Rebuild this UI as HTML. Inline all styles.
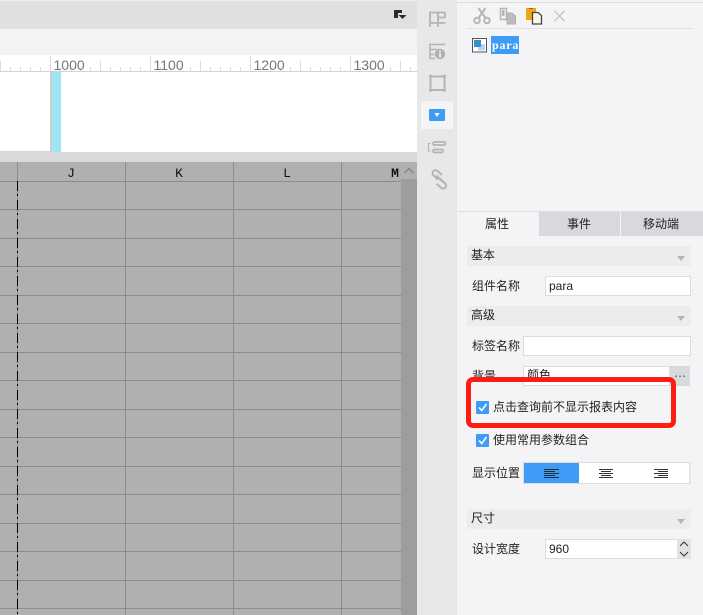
<!DOCTYPE html>
<html lang="zh"><head><meta charset="utf-8"><style>
html,body{margin:0;padding:0}
body{width:703px;height:615px;overflow:hidden;position:relative;background:#f4f4f7;font-family:"Liberation Sans","Noto Sans CJK SC",sans-serif;font-size:12px;color:#222}
.a,.t{position:absolute}
.t{line-height:16px;white-space:nowrap}
.sec{position:absolute;left:467px;width:224px;height:20px;background:#ececec}
.sec:after{content:"";position:absolute;right:6px;top:10px;border:4px solid transparent;border-top:5px solid #b5b5b5;border-bottom:0}
.inp{position:absolute;box-sizing:border-box;background:#fff;border:1px solid #dcdcdc;height:20px;line-height:17px;padding-left:3px}
.cb{position:absolute;width:13px;height:13px;background:#3f9cf6;border-radius:1px}
</style></head><body>
<!-- top left -->
<div class="a" style="left:0;top:0;width:417px;height:2px;background:#eeeeef"></div>
<div class="a" style="left:0;top:1px;width:417px;height:28px;background:#e0e0e2"></div>
<div class="a" style="left:0;top:29px;width:417px;height:26px;background:#f3f3f6"></div>
<svg class="a" style="left:393px;top:9px" width="14" height="12"><path d="M1 1h8v3h-4v5h-4z" fill="#2b2b2b"/><path d="M5.500 6h8l-4 4z" fill="#2b2b2b"/></svg>
<!-- ruler -->
<svg class="a" style="left:0;top:55px" width="417" height="17">
<rect width="417" height="17" fill="#fff"/><rect y="16" width="417" height="1" fill="#d2d2d2"/>
<g stroke="#dcdcdc" stroke-width="1" shape-rendering="crispEdges">
<path d="M0.500 6v10M10.500 12v4M20.500 12v4M30.500 12v4M40.500 12v4M50.500 1v15M60.500 12v4M70.500 12v4M80.500 12v4M90.500 12v4M100.500 6v10M110.500 12v4M120.500 12v4M130.500 12v4M140.500 12v4M150.500 1v15M160.500 12v4M170.500 12v4M180.500 12v4M190.500 12v4M200.500 6v10M210.500 12v4M220.500 12v4M230.500 12v4M240.500 12v4M250.500 1v15M260.500 12v4M270.500 12v4M280.500 12v4M290.500 12v4M300.500 6v10M310.500 12v4M320.500 12v4M330.500 12v4M340.500 12v4M350.500 1v15M360.500 12v4M370.500 12v4M380.500 12v4M390.500 12v4M400.500 6v10M410.500 12v4"/>
</g>
<g font-family="Liberation Sans" font-size="14" fill="#777"><text x="53.500" y="15">1000</text><text x="153.500" y="15">1100</text><text x="253.500" y="15">1200</text><text x="353.500" y="15">1300</text></g>
</svg>
<!-- canvas -->
<div class="a" style="left:0;top:72px;width:417px;height:80px;background:#fff"></div>
<div class="a" style="left:50px;top:72px;width:2px;height:80px;background:#cfcfcf"></div>
<div class="a" style="left:0;top:151px;width:50px;height:1px;background:#d6d6d6"></div>
<div class="a" style="left:52px;top:72px;width:9px;height:80px;background:#9ee6f6"></div>
<div class="a" style="left:0;top:152px;width:417px;height:10px;background:#d9d9db"></div>
<!-- grid -->
<svg class="a" style="left:0;top:162px" width="417" height="453">
<rect width="417" height="453" fill="#b0b0b0"/>
<path d="M17.500 0V453M125.500 0V453M233.500 0V453M341.500 0V453" stroke="#8c8c8c" stroke-width="1" shape-rendering="crispEdges"/>
<path d="M0 19.500H401M0 47.500H401M0 76.500H401M0 104.500H401M0 133.500H401M0 161.500H401M0 190.500H401M0 218.500H401M0 247.500H401M0 275.500H401M0 304.500H401M0 332.500H401M0 361.500H401M0 389.500H401M0 418.500H401M0 446.500H401" stroke="#8c8c8c" stroke-width="1" shape-rendering="crispEdges"/>
<path d="M17.500 19V453" stroke="#000" stroke-width="1" stroke-dasharray="10 3 2 4" shape-rendering="crispEdges"/>
<g font-family="Liberation Mono" font-size="13" fill="#111" text-anchor="middle"><text x="71" y="15">J</text><text x="179" y="15">K</text><text x="287" y="15">L</text><text x="395" y="15" font-weight="bold">M</text></g>
<rect x="401" width="16" height="453" fill="#9d9d9d"/><rect x="401" width="16" height="17" fill="#b0b0b0"/>
<path d="M404.500 11l4.500-4.500 4.500 4.500" fill="none" stroke="#777" stroke-width="1"/>
</svg>
<!-- side icons -->
<div class="a" style="left:417px;top:0;width:40px;height:615px;background:#e8e8e8"></div>
<div class="a" style="left:421px;top:101px;width:32px;height:28px;background:#f4f4f7"></div>
<svg class="a" style="left:417px;top:0" width="40" height="200">
<g fill="none" stroke="#b4b4b4" stroke-width="2">
<path d="M13 27V12.500H28.500M21 12.500V27M28 12.500V17.500M21 17.500H28.500M13 23H28.500" stroke-width="1.800"/>
<path d="M13 59V44.500H28.500M13 49.500H20M13 54.500H17M13 58.500H18" stroke-width="1.600"/>
<rect x="13.500" y="76.500" width="14" height="13.500"/>
<path d="M12 76h3M26 76h3M12 90.500h3M26 90.500h3" stroke-width="2.200"/>
<rect x="16" y="142" width="12.500" height="3" rx="1.500" stroke-width="1.800"/><rect x="16" y="149.500" width="10" height="3" rx="1.500" stroke-width="1.800"/>
<path d="M13.500 143.500h-2v7.500h2" stroke-width="1"/>
<path d="M21 179.500l-4.500-4a3 3 0 0 1 4-4.500l4.500 4" stroke-width="2"/>
<path d="M19 175.500l6 5a3 3 0 0 1-.5 0l3.500 2.800a3 3 0 0 1-4 4.500l-4.500-4" stroke-width="2"/>
</g>
<circle cx="23" cy="54" r="5.200" fill="#b0b0b0"/><rect x="22" y="50.500" width="2" height="2" fill="#e8e8e8"/><rect x="22" y="53" width="2" height="4.500" fill="#e8e8e8"/>
<rect x="12" y="109" width="16" height="12" rx="1" fill="#3f9cf6"/><path d="M17.500 113h5l-2.500 4z" fill="#fff"/>
</svg>
<!-- right top -->
<div class="a" style="left:457px;top:2px;width:246px;height:1px;background:#dcdcde"></div>
<div class="a" style="left:467px;top:28px;width:226px;height:1px;background:#e3e3e5"></div>
<svg class="a" style="left:470px;top:6px" width="100" height="20">
<g fill="none" stroke="#b5b5b5" stroke-width="2"><circle cx="7" cy="14.500" r="2.800"/><circle cx="17" cy="14.500" r="2.800"/><path d="M8.500 12L15.500 2M15.500 12L8.500 2"/></g>
<path d="M30.500 2.500h6v11h-6z" fill="none" stroke="#b5b5b5" stroke-width="1.500"/><rect x="32" y="4" width="2.500" height="6" fill="#b5b5b5"/>
<path d="M37 7h5l3.500 3v8h-8.500z" fill="#bdbdbd" stroke="#b0b0b0"/>
<rect x="56" y="2" width="10" height="12" fill="#f2a70f"/><rect x="59" y="2" width="4" height="1" fill="#b0562a"/>
<path d="M62.500 6.500h5.500l3.500 3v8.500h-9z" fill="#fdf6e2" stroke="#444" stroke-width="1.300"/>
<path d="M84.500 5l10 10M94.500 5l-10 10" stroke="#c4c4c4" stroke-width="1.300"/>
</svg>
<svg class="a" style="left:472px;top:38px" width="15" height="15"><rect x=".5" y=".5" width="14" height="13.500" fill="#fff" stroke="#555"/><rect x="6" y="6" width="7" height="6.500" fill="#b9d2f2"/><rect x="2" y="2" width="7" height="7" fill="#3c8ec9"/></svg>
<div class="a" style="left:491px;top:36px;width:28px;height:18px;background:#3f9cf6"></div>
<div class="t" style="left:492px;top:38px;font-family:'Liberation Serif',serif;font-size:12px;font-weight:bold;line-height:15px;color:#fff;letter-spacing:.800px">para</div>
<!-- tabs -->
<div class="a" style="left:458px;top:211px;width:245px;height:1px;background:#dedee0"></div>
<div class="a" style="left:539px;top:212px;width:81px;height:24px;background:#d8d9dc"></div>
<div class="a" style="left:621px;top:212px;width:82px;height:24px;background:#d8d9dc"></div>
<div class="t" style="left:485px;top:216px">属性</div>
<div class="t" style="left:567px;top:216px">事件</div>
<div class="t" style="left:643px;top:216px">移动端</div>
<!-- sections -->
<div class="sec" style="top:246px"></div><div class="t" style="left:471px;top:247px">基本</div>
<div class="t" style="left:472px;top:278px">组件名称</div>
<div class="inp" style="left:545px;top:276px;width:146px;line-height:19px">para</div>
<div class="sec" style="top:306px"></div><div class="t" style="left:471px;top:307px">高级</div>
<div class="t" style="left:472px;top:338px">标签名称</div>
<div class="inp" style="left:523px;top:336px;width:168px"></div>
<div class="t" style="left:472px;top:368px">背景</div>
<div class="inp" style="left:523px;top:366px;width:147px">颜色</div>
<svg class="a" style="left:670px;top:366px" width="20" height="20"><rect width="20" height="20" fill="#d8d9dc"/><path d="M5 9.500h2v1.500h-2zM9 9.500h2v1.500h-2zM13 9.500h2v1.500h-2z" fill="#888"/></svg>
<!-- checkboxes -->
<div class="cb" style="left:476px;top:401px"></div>
<svg class="a" style="left:476px;top:401px" width="13" height="13"><path d="M3 6.500l2.700 3L10.500 3" fill="none" stroke="#fff" stroke-width="1.600"/></svg>
<div class="t" style="left:493px;top:399px">点击查询前不显示报表内容</div>
<div class="cb" style="left:476px;top:434px"></div>
<svg class="a" style="left:476px;top:434px" width="13" height="13"><path d="M3 6.500l2.700 3L10.500 3" fill="none" stroke="#fff" stroke-width="1.600"/></svg>
<div class="t" style="left:493px;top:432px">使用常用参数组合</div>
<!-- red box -->
<div class="a" style="left:466px;top:377px;width:210px;height:51px;box-sizing:border-box;border:5px solid #ff1c12;border-radius:7px"></div>
<!-- align -->
<div class="t" style="left:472px;top:465px">显示位置</div>
<div class="a" style="left:523px;top:462px;width:168px;height:22px;box-sizing:border-box;background:#fff;border:1px solid #dcdcdc;border-right:2px solid #e6e6e8"></div>
<div class="a" style="left:524px;top:463px;width:55px;height:20px;background:#3f9cf6"></div>
<svg class="a" style="left:524px;top:463px" width="166" height="20" shape-rendering="crispEdges">
<path d="M20 6.500H35M20 8.500H31M20 10.500H35M20 12.500H31M20 14.500H35" stroke="#1f2a3a"/>
<path d="M75 6.500H89M77 8.500H87M75 10.500H89M77 12.500H87M75 14.500H89" stroke="#333"/>
<path d="M130 6.500H144M134 8.500H144M130 10.500H144M134 12.500H144M130 14.500H144" stroke="#333"/>
</svg>
<!-- size -->
<div class="sec" style="top:509px"></div><div class="t" style="left:471px;top:510px">尺寸</div>
<div class="t" style="left:472px;top:541px">设计宽度</div>
<div class="inp" style="left:545px;top:539px;width:146px;background:#fff;line-height:18px">960</div>
<div class="a" style="left:677px;top:539px;width:14px;height:20px;background:#e2e2e4"></div>
<svg class="a" style="left:677px;top:539px" width="14" height="20"><path d="M3 7l4-4 4 4M3 13l4 4 4-4" fill="none" stroke="#333" stroke-width="1"/></svg>
</body></html>
